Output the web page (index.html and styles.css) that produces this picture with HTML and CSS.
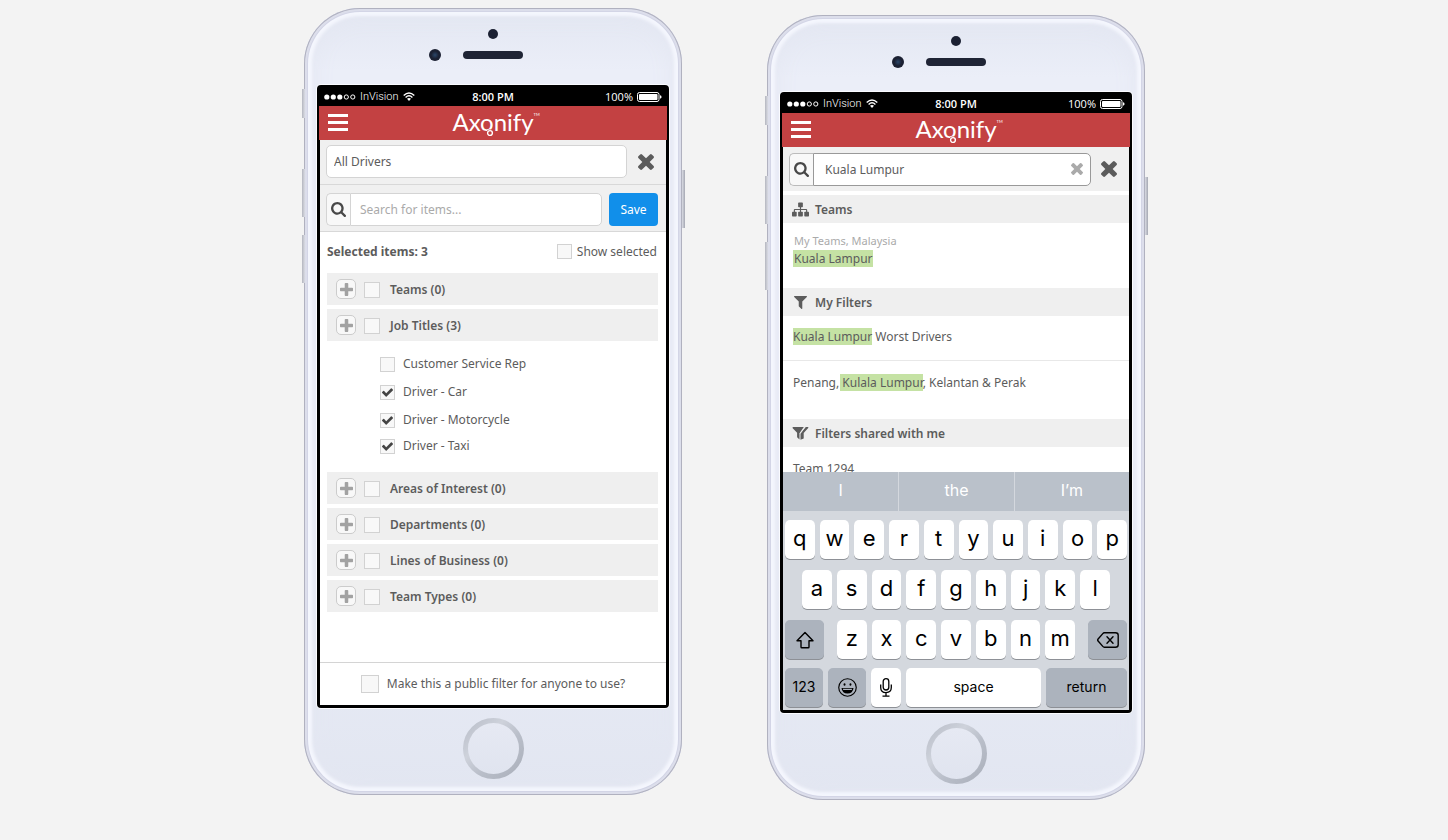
FILE: index.html
```html
<!DOCTYPE html>
<html lang="en">
<head>
<meta charset="utf-8">
<meta name="viewport" content="width=device-width, initial-scale=1">
<title>Axonify filters</title>
<link rel="stylesheet" href="styles.css">
</head>
<body>
<svg class="sprite" aria-hidden="true">
  <symbol id="times" viewBox="302 366 1188 1188"><path d="M1490 1322q0 40-28 68l-136 136q-28 28-68 28t-68-28l-294-294-294 294q-28 28-68 28t-68-28l-136-136q-28-28-28-68t28-68l294-294-294-294q-28-28-28-68t28-68l136-136q28-28 68-28t68 28l294 294 294-294q28-28 68-28t68 28l136 136q28 28 28 68t-28 68l-294 294 294 294q28 28 28 68z"/></symbol>
  <symbol id="search" viewBox="64 128 1664 1664"><path d="M1216 832q0-185-131.500-316.500t-316.500-131.500-316.500 131.500-131.500 316.500 131.500 316.500 316.500 131.500 316.500-131.500 131.500-316.500zm512 832q0 52-38 90t-90 38q-54 0-90-38l-343-342q-179 124-399 124-143 0-273.500-55.500t-225-150-150-225-55.500-273.500 55.500-273.500 150-225 225-150 273.500-55.500 273.500 55.500 225 150 150 225 55.500 273.500q0 220-124 399l343 343q37 37 37 90z"/></symbol>
  <symbol id="plus" viewBox="192 128 1408 1408"><path d="M1600 736v192q0 40-28 68t-68 28h-416v416q0 40-28 68t-68 28h-192q-40 0-68-28t-28-68v-416h-416q-40 0-68-28t-28-68v-192q0-40 28-68t68-28h416v-416q0-40 28-68t68-28h192q40 0 68 28t28 68v416h416q40 0 68 28t28 68z"/></symbol>
  <symbol id="check" viewBox="121 334 1550 1188"><path d="M1671 566q0 40-28 68l-724 724-136 136q-28 28-68 28t-68-28l-136-136-362-362q-28-28-28-68t28-68l136-136q28-28 68-28t68 28l294 295 656-657q28-28 68-28t68 28l136 136q28 28 28 68z"/></symbol>
  <symbol id="filter" viewBox="190 256 1410 1410"><path d="M1595 295q17 41-14 70l-493 493v742q0 42-39 59-13 5-25 5-27 0-45-19l-256-256q-19-19-19-45v-486l-493-493q-31-29-14-70 17-39 59-39h1280q42 0 59 39z"/></symbol>
  <symbol id="filter-shared" viewBox="0 0 16 13"><path d="M.6 0h10.700L7 6.200V12.600L4.600 10.300V5.700L.2 1.200Q-.3 0 .6 0z"/><path d="M13.200 0h2.300q.8.300.2 1.100L11.200 6v5.600L8 12.800V6.600z"/><path d="M12.600 0L7.500 6.700" stroke="#efefef" stroke-width=".7" fill="none"/></symbol>
  <symbol id="sitemap" viewBox="0 0 18 15"><rect x="6.500" y="0" width="5" height="5" rx=".8"/><rect x="0" y="10" width="5" height="5" rx=".8"/><rect x="6.500" y="10" width="5" height="5" rx=".8"/><rect x="13" y="10" width="5" height="5" rx=".8"/><path d="M9 4v7M2.500 11V8Q2.500 7.500 3 7.500h12q.5 0 .5.500v3" fill="none" stroke="currentColor" stroke-width="1.200"/></symbol>
  <symbol id="menu" viewBox="0 0 20 17"><path d="M0 0h20v3H0zM0 7h20v3H0zM0 14h20v3H0z"/></symbol>
  <symbol id="signal" viewBox="0 0 32 6"><circle cx="2.800" cy="3" r="2.600"/><circle cx="9.300" cy="3" r="2.600"/><circle cx="15.800" cy="3" r="2.600"/><g fill="none" stroke="currentColor" stroke-width="1"><circle cx="22.300" cy="3" r="2.100"/><circle cx="28.800" cy="3" r="2.100"/></g></symbol>
  <symbol id="wifi" viewBox="0 0 12 9"><g fill="none" stroke="currentColor" stroke-width="1.400"><path d="M.7 3.400Q6-1.600 11.300 3.400"/><path d="M2.600 5.400Q6 2.300 9.400 5.400"/></g><path d="M4 6.800Q6 5.300 8 6.800L6 9z"/></symbol>
  <symbol id="battery" viewBox="0 0 25 10"><rect x=".5" y=".5" width="21.500" height="9" rx="2" fill="none" stroke="currentColor"/><rect x="2" y="2" width="18.500" height="6" rx=".8"/><path d="M23 3.300q1.600.3 1.600 1.700T23 6.700z"/></symbol>
  <symbol id="shift" viewBox="0 0 20 18"><path d="M10 1.500L18 9.800h-4V16q0 .8-.8.800H6.800Q6 16.800 6 16V9.800H2z" fill="none" stroke="currentColor" stroke-width="1.400" stroke-linejoin="round"/></symbol>
  <symbol id="erase" viewBox="0 0 22 16"><path d="M7.300.8H18.500Q21.200.8 21.200 3.300v9.400q0 2.500-2.700 2.500H7.300q-.8 0-1.500-.8L.9 8.800q-.5-.8 0-1.500L5.800 1.600Q6.500.8 7.300.8zM10 4.800l6 6.400M16 4.800l-6 6.400" fill="none" stroke="currentColor" stroke-width="1.400" stroke-linecap="round"/></symbol>
  <symbol id="smile" viewBox="0 0 18 18"><circle cx="9" cy="9" r="8.300" fill="none" stroke="currentColor" stroke-width="1.100"/><ellipse cx="6.200" cy="6.100" rx=".9" ry="1.200"/><ellipse cx="11.800" cy="6.100" rx=".9" ry="1.200"/><path d="M3.300 9.400h11.400Q14 14.800 9 14.800T3.300 9.400z"/><path d="M4.600 10.200h8.800l-.4 1.200H5z" fill="#acb3bd"/></symbol>
  <symbol id="mic" viewBox="0 0 12 19"><g fill="none" stroke="currentColor" stroke-width="1.300"><rect x="3.200" y=".7" width="5.600" height="11.300" rx="2.800"/><path d="M.7 6.500V9.500Q.7 14.600 6 14.600T11.300 9.500V6.500M6 14.600V18M2.500 18.200h7"/></g></symbol>
</svg>

<main class="stage">
  <article class="phone" aria-label="Edit filter">
    <i class="side mute"></i><i class="side volume-up"></i><i class="side volume-down"></i><i class="side power"></i>
    <div class="earpiece"><i class="camera"></i><i class="sensor"></i><i class="speaker"></i></div>
    <div class="screen">
      <div class="status">
        <span class="carrier"><svg class="icon-signal"><use href="#signal"/></svg>InVision<svg class="icon-wifi"><use href="#wifi"/></svg></span>
        <span class="clock">8:00 PM</span>
        <span class="charge">100%<svg class="icon-battery"><use href="#battery"/></svg></span>
      </div>
      <header class="appbar">
        <button class="plain" type="button" aria-label="Menu"><svg class="icon-menu"><use href="#menu"/></svg></button>
        <div class="logo">Axonify<svg class="logo-loop" viewBox="0 0 8 8"><circle cx="4" cy="4" r="3.400" fill="#c34142"/><circle cx="4" cy="4" r="2.400" fill="none" stroke="#fff" stroke-width="1.400"/></svg><span class="tm">TM</span></div>
      </header>
      <div class="view">
        <div class="bar name-bar">
          <input class="field name-field" type="text" value="All Drivers" aria-label="Filter name">
          <button class="plain close" type="button" aria-label="Close"><svg class="icon-close"><use href="#times"/></svg></button>
        </div>
        <div class="bar search-bar">
          <div class="group">
            <label class="addon" for="item-search"><svg class="icon-search" role="img" aria-label="Search"><use href="#search"/></svg></label>
            <input class="field group-field" id="item-search" type="text" placeholder="Search for items...">
          </div>
          <button class="save" type="button">Save</button>
        </div>
        <div class="summary">
          <strong>Selected items: 3</strong>
          <label class="option"><span class="tick small"><input type="checkbox"></span>Show selected</label>
        </div>
        <div class="sections">
          <div class="section"><button class="expand" type="button" aria-label="Expand Teams"><svg class="icon-plus"><use href="#plus"/></svg></button><label class="section-name"><span class="tick medium"><input type="checkbox"></span>Teams (0)</label></div>
          <div class="section"><button class="expand" type="button" aria-label="Expand Job Titles"><svg class="icon-plus"><use href="#plus"/></svg></button><label class="section-name"><span class="tick medium"><input type="checkbox"></span>Job Titles (3)</label></div>
          <div class="titles">
            <label class="option"><span class="tick small"><input type="checkbox"></span>Customer Service Rep</label>
            <label class="option"><span class="tick small"><input type="checkbox" checked><svg class="icon-check"><use href="#check"/></svg></span>Driver - Car</label>
            <label class="option"><span class="tick small"><input type="checkbox" checked><svg class="icon-check"><use href="#check"/></svg></span>Driver - Motorcycle</label>
            <label class="option"><span class="tick small"><input type="checkbox" checked><svg class="icon-check"><use href="#check"/></svg></span>Driver - Taxi</label>
          </div>
          <div class="section"><button class="expand" type="button" aria-label="Expand Areas of Interest"><svg class="icon-plus"><use href="#plus"/></svg></button><label class="section-name"><span class="tick medium"><input type="checkbox"></span>Areas of Interest (0)</label></div>
          <div class="section"><button class="expand" type="button" aria-label="Expand Departments"><svg class="icon-plus"><use href="#plus"/></svg></button><label class="section-name"><span class="tick medium"><input type="checkbox"></span>Departments (0)</label></div>
          <div class="section"><button class="expand" type="button" aria-label="Expand Lines of Business"><svg class="icon-plus"><use href="#plus"/></svg></button><label class="section-name"><span class="tick medium"><input type="checkbox"></span>Lines of Business (0)</label></div>
          <div class="section"><button class="expand" type="button" aria-label="Expand Team Types"><svg class="icon-plus"><use href="#plus"/></svg></button><label class="section-name"><span class="tick medium"><input type="checkbox"></span>Team Types (0)</label></div>
        </div>
        <footer class="public"><label class="option"><span class="tick large"><input type="checkbox"></span>Make this a public filter for anyone to use?</label></footer>
      </div>
    </div>
    <div class="home"></div>
  </article>

  <article class="phone second" aria-label="Search filters">
    <i class="side mute"></i><i class="side volume-up"></i><i class="side volume-down"></i><i class="side power"></i>
    <div class="earpiece"><i class="camera"></i><i class="sensor"></i><i class="speaker"></i></div>
    <div class="screen">
      <div class="status">
        <span class="carrier"><svg class="icon-signal"><use href="#signal"/></svg>InVision<svg class="icon-wifi"><use href="#wifi"/></svg></span>
        <span class="clock">8:00 PM</span>
        <span class="charge">100%<svg class="icon-battery"><use href="#battery"/></svg></span>
      </div>
      <header class="appbar">
        <button class="plain" type="button" aria-label="Menu"><svg class="icon-menu"><use href="#menu"/></svg></button>
        <div class="logo">Axonify<svg class="logo-loop" viewBox="0 0 8 8"><circle cx="4" cy="4" r="3.400" fill="#c34142"/><circle cx="4" cy="4" r="2.400" fill="none" stroke="#fff" stroke-width="1.400"/></svg><span class="tm">TM</span></div>
      </header>
      <div class="view">
        <div class="bar query-bar">
          <div class="group active">
            <label class="addon" for="query"><svg class="icon-search" role="img" aria-label="Search"><use href="#search"/></svg></label>
            <div class="query-box">
              <input class="query" id="query" type="text" value="Kuala Lumpur">
              <button class="plain clear" type="button" aria-label="Clear"><svg class="icon-clear"><use href="#times"/></svg></button>
            </div>
          </div>
          <button class="plain close" type="button" aria-label="Close"><svg class="icon-close"><use href="#times"/></svg></button>
        </div>
        <div class="results">
          <h2 class="heading"><svg class="icon-heading"><use href="#sitemap"/></svg>Teams</h2>
          <div class="team">
            <div class="path">My Teams, Malaysia</div>
            <div><mark class="team-name">Kuala Lampur</mark></div>
          </div>
          <h2 class="heading"><svg class="icon-heading narrow"><use href="#filter"/></svg>My Filters</h2>
          <ul class="filters">
            <li><mark>Kuala Lumpur</mark> Worst Drivers</li>
            <li>Penang, <mark class="inner">Kulala Lumpur</mark>, Kelantan &amp; Perak</li>
          </ul>
          <h2 class="heading"><svg class="icon-heading narrow"><use href="#filter-shared"/></svg>Filters shared with me</h2>
          <div class="shared">Team 1294</div>
        </div>
        <div class="keyboard">
          <div class="suggestions"><button type="button">I</button><button type="button">the</button><button type="button">I’m</button></div>
          <div class="keys">
            <div class="row"><button class="key">q</button><button class="key">w</button><button class="key">e</button><button class="key">r</button><button class="key">t</button><button class="key">y</button><button class="key">u</button><button class="key">i</button><button class="key">o</button><button class="key">p</button></div>
            <div class="row home-row"><button class="key">a</button><button class="key">s</button><button class="key">d</button><button class="key">f</button><button class="key">g</button><button class="key">h</button><button class="key">j</button><button class="key">k</button><button class="key">l</button></div>
            <div class="row lower-row">
              <button class="key gray shift-key" aria-label="Shift"><svg class="icon-shift"><use href="#shift"/></svg></button>
              <div class="row letters"><button class="key">z</button><button class="key">x</button><button class="key">c</button><button class="key">v</button><button class="key">b</button><button class="key">n</button><button class="key">m</button></div>
              <button class="key gray shift-key" aria-label="Delete"><svg class="icon-erase"><use href="#erase"/></svg></button>
            </div>
            <div class="row bottom-row">
              <button class="key gray word">123</button>
              <button class="key gray symbol" aria-label="Emoji"><svg class="icon-smile"><use href="#smile"/></svg></button>
              <button class="key symbol" aria-label="Dictate"><svg class="icon-mic"><use href="#mic"/></svg></button>
              <button class="key word">space</button>
              <button class="key gray word">return</button>
            </div>
          </div>
        </div>
      </div>
    </div>
    <div class="home"></div>
  </article>
</main>
</body>
</html>
```

FILE: styles.css
```css
* { box-sizing: border-box; }
body {
  margin: 0;
  background: #f3f3f3;
  color: #5c5c5c;
  font: 12px/18px "Noto Sans", "Open Sans", sans-serif;
}
button, input { font: inherit; color: inherit; }
button { padding: 0; border: 0; cursor: pointer; }
svg { display: block; fill: currentColor; flex: none; }
.sprite { position: absolute; width: 0; height: 0; }
.plain { background: none; }

.stage {
  display: flex;
  flex-wrap: wrap;
  justify-content: center;
  align-items: flex-start;
  gap: 85px;
  padding: 8px 0 8px 1px;
}

/* Device shell */
.phone {
  position: relative;
  flex: 0 1 378px;
  padding: 0 13px 16px;
  border-radius: 56px;
  background: linear-gradient(#e3e7f2, #ebeef8 8%, #ebeef8 60%, #e2e6f1);
  box-shadow: inset 0 0 0 1px #b0b1bf, inset 0 0 0 3px #dcdeeb, inset 0 0 0 4px #d3d5e6, inset 0 0 3px 8px #f4f6fd, inset 0 0 24px 8px #e4e7f2;
}
.second { margin-top: 7px; }
.side { position: absolute; width: 3px; left: -2px; background: linear-gradient(90deg, #b4b6bf, #dadce4); }
.mute { top: 81px; height: 29px; }
.volume-up { top: 161px; height: 48px; }
.volume-down { top: 227px; height: 48px; }
.power { top: 162px; height: 58px; left: auto; right: -3px; background: linear-gradient(90deg, #dadce4, #a4a7b2); }

.earpiece {
  display: grid;
  grid-template-columns: 1fr 60px 1fr;
  grid-template-rows: 10px 12px;
  row-gap: 10px;
  align-items: center;
  height: 77px;
  padding-top: 21px;
}
.camera { grid-column: 2; justify-self: center; width: 10px; height: 10px; border-radius: 50%; background: #1b2032; }
.sensor { grid-column: 1; grid-row: 2; justify-self: end; width: 12px; height: 12px; margin-right: 22px; border-radius: 50%; background: radial-gradient(#2b4669, #1b2032 45%); }
.speaker { grid-column: 2; grid-row: 2; height: 8px; border-radius: 4px; background: #1f2435; }
.home {
  width: 61px;
  height: 61px;
  margin: 10px auto 0;
  border-radius: 50%;
  background: linear-gradient(#e6e9f3, #e0e4ef) padding-box, linear-gradient(135deg, #b6bbc6, #ced2db 35%, #b9bec9 60%, #a9aeb9) border-box;
  border: 5px solid transparent;
}

.screen { border: 2px solid #000; border-bottom-width: 3px; border-radius: 4px; background: #000; box-shadow: 0 0 0 1px #fafbff; }
.view { margin: 0 1px; background: #fff; }

.status {
  display: grid;
  grid-template-columns: 1fr auto 1fr;
  align-items: center;
  height: 19px;
  padding: 0 5px;
  color: #fff;
  font: 11px/16px "Open Sans", sans-serif;
}
.carrier, .charge { display: flex; align-items: center; gap: 4px; }
.carrier { font-family: Roboto, sans-serif; font-weight: 300; }
.charge { justify-content: flex-end; }
.clock { font-weight: 600; }
.icon-signal { width: 32px; height: 6px; }
.icon-wifi { width: 12px; height: 9px; }
.icon-battery { width: 25px; height: 10px; }

.appbar {
  display: grid;
  grid-template-columns: 1fr auto 1fr;
  align-items: center;
  height: 34px;
  padding: 0 9px 2px;
  background: #c34142;
  color: #fff;
}
.appbar .plain { justify-self: start; }
.icon-menu { width: 20px; height: 17px; }
.logo { position: relative; font: 24px/30px Lato, sans-serif; }
.logo-loop { position: absolute; left: 34px; top: 22px; width: 8px; height: 8px; }
.tm { position: absolute; left: 100%; top: 5px; font-size: 4px; line-height: 5px; }

/* Filter editor */
.bar { display: flex; align-items: center; background: #f0f0f0; }
.name-bar { height: 45px; padding: 0 12px 1px 6px; gap: 11px; border-bottom: 1px solid #d8d8d8; }
.search-bar { height: 47px; padding: 2px 8px 0 6px; gap: 7px; border-bottom: 1px solid #d8d8d8; }
.field { min-width: 0; height: 33px; border: 1px solid #d4d4d4; background: #fff; outline: 0; }
.name-field { flex: 1; padding: 0 7px; border-radius: 5px; }
.icon-close { width: 16px; height: 16px; }
.group { display: flex; flex: 1; min-width: 0; }
.addon { display: grid; place-items: center; width: 24px; height: 33px; border: 1px solid #d4d4d4; border-right: 0; border-radius: 5px 0 0 5px; background: #f8f8f8; color: #484848; }
.icon-search { width: 15px; height: 15px; }
.group-field { flex: 1; padding: 1px 9px 0; border-radius: 0 5px 5px 0; }
.group-field::placeholder { color: #aaa; opacity: 1; }
.save { width: 49px; height: 33px; padding-top: 2px; border-radius: 4px; background: #118fea; color: #fff; }

.summary { display: flex; justify-content: space-between; align-items: center; height: 41px; padding: 0 9px 2px 7px; }
.option { display: flex; align-items: center; }
.tick { display: grid; place-items: center; margin-right: 8px; }
.tick input { grid-area: 1 / 1; width: 15px; height: 15px; margin: 0; appearance: none; border: 1px solid #d2d2d2; background: #f8f8f8; }
.icon-check { grid-area: 1 / 1; width: 11px; height: 9px; color: #444; pointer-events: none; }
.summary .tick { margin-right: 5px; }
.medium input { width: 16px; height: 16px; }
.large input { width: 18px; height: 18px; }

.sections { display: grid; gap: 4px; padding: 0 8px 0 7px; }
.section { display: flex; align-items: center; gap: 8px; height: 32px; padding-left: 9px; background: #efefef; }
.section-name { display: flex; align-items: center; padding-top: 1px; font-weight: 600; }
.section-name .tick { margin-right: 10px; }
.expand { display: grid; place-items: center; width: 20px; height: 20px; border: 1px solid #ccc; border-radius: 5px; background: #f8f8f8; color: #a2a2a2; }
.icon-plus { width: 13px; height: 13px; }
.titles { padding: 5px 0 10px 53px; }
.titles .option { height: 28px; }
.titles .option:last-child { height: 24px; }
.public { display: grid; place-items: center; height: 43px; margin-top: 50px; border-top: 1px solid #d4d4d4; }

/* Search results */
.query-bar { height: 44px; padding: 0 12px 0 6px; gap: 10px; }
.active .addon { border-color: #bbb; }
.query-box { display: flex; align-items: center; flex: 1; min-width: 0; height: 33px; padding: 0 7px 0 11px; border: 1px solid #999; border-radius: 0 5px 5px 0; background: #fff; }
.query { flex: 1; min-width: 0; padding: 1px 0 0; border: 0; outline: 0; background: none; }
.clear { color: #aaa; }
.icon-clear { width: 12px; height: 12px; }
.results { height: 281px; padding-top: 4px; overflow: hidden; }
.heading { display: flex; align-items: center; gap: 6px; height: 28px; margin: 0; padding: 1px 9px 0; background: #efefef; font-size: 12px; font-weight: 600; }
.icon-heading { width: 17px; height: 15px; }
.narrow { height: 13px; }
.team { height: 65px; padding: 9px 10px; }
.path { padding-left: 1px; color: #aaa; font-size: 11px; }
mark { background: #c5e2a4; color: inherit; }
.team-name { padding-left: 1px; }
.inner { margin-left: -2px; padding-left: 2px; }
.filters { height: 103px; margin: 0; padding: 0; list-style: none; }
.filters li { padding: 12px 10px 14px; }
.filters li + li { padding-top: 13px; border-top: 1px solid #e8e8e8; }
.shared { padding: 13px 10px; }

/* On-screen keyboard */
.keyboard { background: #d4d8de; color: #000; font-family: Inter, sans-serif; }
.suggestions { display: grid; grid-template-columns: repeat(3, 1fr); height: 39px; background: #bac1ca; color: #fff; font-size: 16px; }
.suggestions button { background: none; padding-bottom: 4px; }
.suggestions button + button { border-left: 1px solid #d4d8de; }
.keys { display: grid; gap: 11px; padding: 9px 2px 3px; }
.row { display: flex; gap: 5px; }
.home-row { padding: 0 17px; }
.lower-row { justify-content: space-between; }
.letters { flex: 0 1 238px; }
.bottom-row { display: grid; grid-template-columns: 38px 38px 30px 1fr 81px; margin-top: -2px; }
.key { display: grid; place-items: center; flex: 1; height: 39px; padding-bottom: 3px; border-radius: 5px; background: #fff; box-shadow: 0 1px 0 #8d9096; font-size: 22px; }
.gray { background: #acb3bd; }
.shift-key { flex: 0 0 39px; padding: 0; }
.word { padding-bottom: 2px; font-size: 14px; }
.symbol { padding: 0; }
.icon-shift { width: 20px; height: 18px; }
.icon-erase { width: 22px; height: 16px; }
.icon-smile { width: 19px; height: 19px; }
.icon-mic { width: 12px; height: 19px; }
```
